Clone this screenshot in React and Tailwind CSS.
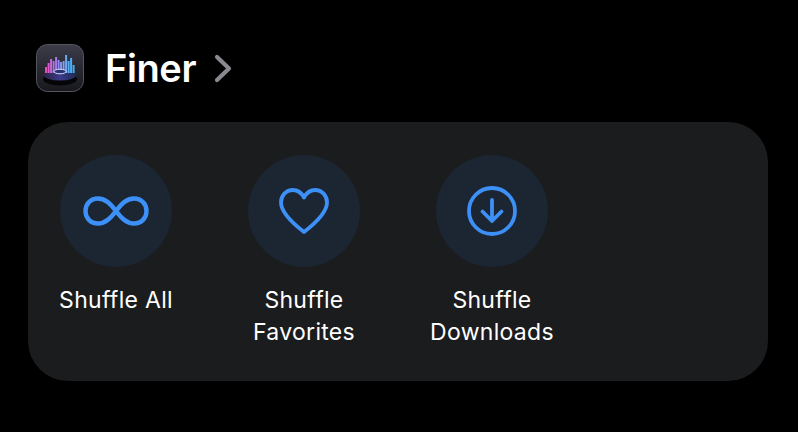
import React from 'react'

const font = { fontFamily: '"Inter", "Liberation Sans", sans-serif' }

// 棒グラフ状のアプリアイコン
const AppIcon = () => {
  const bars = [
    [10, 23, '#e455b8'], [12.5, 19, '#dc5cc8'], [15, 15, '#c868dc'], [17.5, 17, '#b070e6'],
    [20, 13, '#a07ce8'], [22.5, 16, '#9488ee'], [25, 18, '#8894f0'], [27.5, 17, '#7ca0f2'],
    [30, 11, '#70a8f4'], [32.5, 17, '#5cacf4'], [35, 14, '#4cb0f4'], [37.5, 21, '#42b0f0'],
  ]
  return (
    <svg width="48" height="48" viewBox="0 0 48 48" className="shrink-0">
      <defs>
        <linearGradient id="bg" x1="0" y1="0" x2="0" y2="1">
          <stop offset="0" stopColor="#3c3c4a" />
          <stop offset="1" stopColor="#17171d" />
        </linearGradient>
        <linearGradient id="disc" x1="0" y1="0" x2="1" y2="0">
          <stop offset="0" stopColor="#2a2440" />
          <stop offset="0.5" stopColor="#3d3a8a" />
          <stop offset="1" stopColor="#1c2c50" />
        </linearGradient>
        <filter id="soft" x="-20%" y="-20%" width="140%" height="140%">
          <feGaussianBlur stdDeviation="0.7" />
        </filter>
      </defs>
      <rect x="0.5" y="0.5" width="47" height="47" rx="11" fill="url(#bg)" stroke="#56565f" strokeWidth="1" />
      <ellipse cx="24" cy="35" rx="17" ry="6.5" fill="#050507" />
      <ellipse cx="24" cy="31" rx="16.5" ry="5.5" fill="url(#disc)" />
      <g filter="url(#soft)">
        {bars.map(([x, y, color]) => (
          <rect key={x} x={x - 0.9} y={y} width="2" height={29 - y} fill={color} />
        ))}
      </g>
      <ellipse cx="24" cy="27.5" rx="6" ry="2.3" fill="#2c2f70" stroke="#d5e2ff" strokeWidth="1" />
    </svg>
  )
}

const Infinity8 = () => (
  <svg width="66" height="30" viewBox="0 0 66 30" fill="none" stroke="#3d90f7" strokeWidth="4.4">
    <path d="M33 15C27.5 7.5 22.5 2.5 15 2.5C7.5 2.5 2.5 8 2.5 15C2.5 22 7.5 27.5 15 27.5C22.5 27.5 27.5 22.5 33 15C38.5 7.5 43.5 2.5 51 2.5C58.5 2.5 63.5 8 63.5 15C63.5 22 58.5 27.5 51 27.5C43.5 27.5 38.5 22.5 33 15Z" />
  </svg>
)

const Heart = () => (
  <svg width="50" height="46" viewBox="0 0 50 46" fill="none" stroke="#3d90f7" strokeWidth="3.8" strokeLinejoin="round">
    <path d="M25 9.5C22.5 5 18.5 2 14 2C7 2 2 7.5 2 14.5C2 25 14 35.5 25 44C36 35.5 48 25 48 14.5C48 7.5 43 2 36 2C31.5 2 27.5 5 25 9.5Z" />
  </svg>
)

const DownloadCircle = () => (
  <svg width="50" height="50" viewBox="0 0 50 50" fill="none" stroke="#3d90f7" strokeWidth="3.8" strokeLinecap="round" strokeLinejoin="round">
    <circle cx="25" cy="25" r="23" />
    <path d="M25 14V35M15.5 25.5L25 35L34.5 25.5" />
  </svg>
)

const items = [
  { label: ['Shuffle All'], icon: <Infinity8 /> },
  { label: ['Shuffle', 'Favorites'], icon: <Heart /> },
  { label: ['Shuffle', 'Downloads'], icon: <DownloadCircle /> },
]

export default function App() {
  return (
    <div className="w-[798px] h-[432px] bg-black overflow-hidden pt-[44px] pl-[28px]" style={font}>
      {/* ヘッダー */}
      <div className="flex items-center h-[48px] pl-[8px]">
        <AppIcon />
        <span className="ml-[21px] text-[38px] font-semibold tracking-[-0.4px] text-white leading-none">Finer</span>
        <svg width="18" height="29" viewBox="0 0 18 29" fill="none" stroke="#8a8a8e" strokeWidth="4.2" strokeLinecap="round" strokeLinejoin="round" className="ml-[18px]">
          <path d="M3 3L15 14.5L3 26" />
        </svg>
      </div>

      {/* カード */}
      <div className="mt-[30px] w-[740px] h-[259px] rounded-[40px] bg-[#1b1c1d] pt-[33px] pl-[32px] flex gap-[76px]">
        {items.map((item) => (
          <div key={item.label.join(' ')} className="w-[112px] flex flex-col items-center">
            <div className="w-[112px] h-[112px] rounded-full bg-[#1c2632] flex items-center justify-center shrink-0">
              {item.icon}
            </div>
            <div className="mt-[17px] text-[23px] leading-[32px] tracking-[0.3px] text-white text-center whitespace-nowrap">
              {item.label.map((line) => (
                <div key={line}>{line}</div>
              ))}
            </div>
          </div>
        ))}
      </div>
    </div>
  )
}
